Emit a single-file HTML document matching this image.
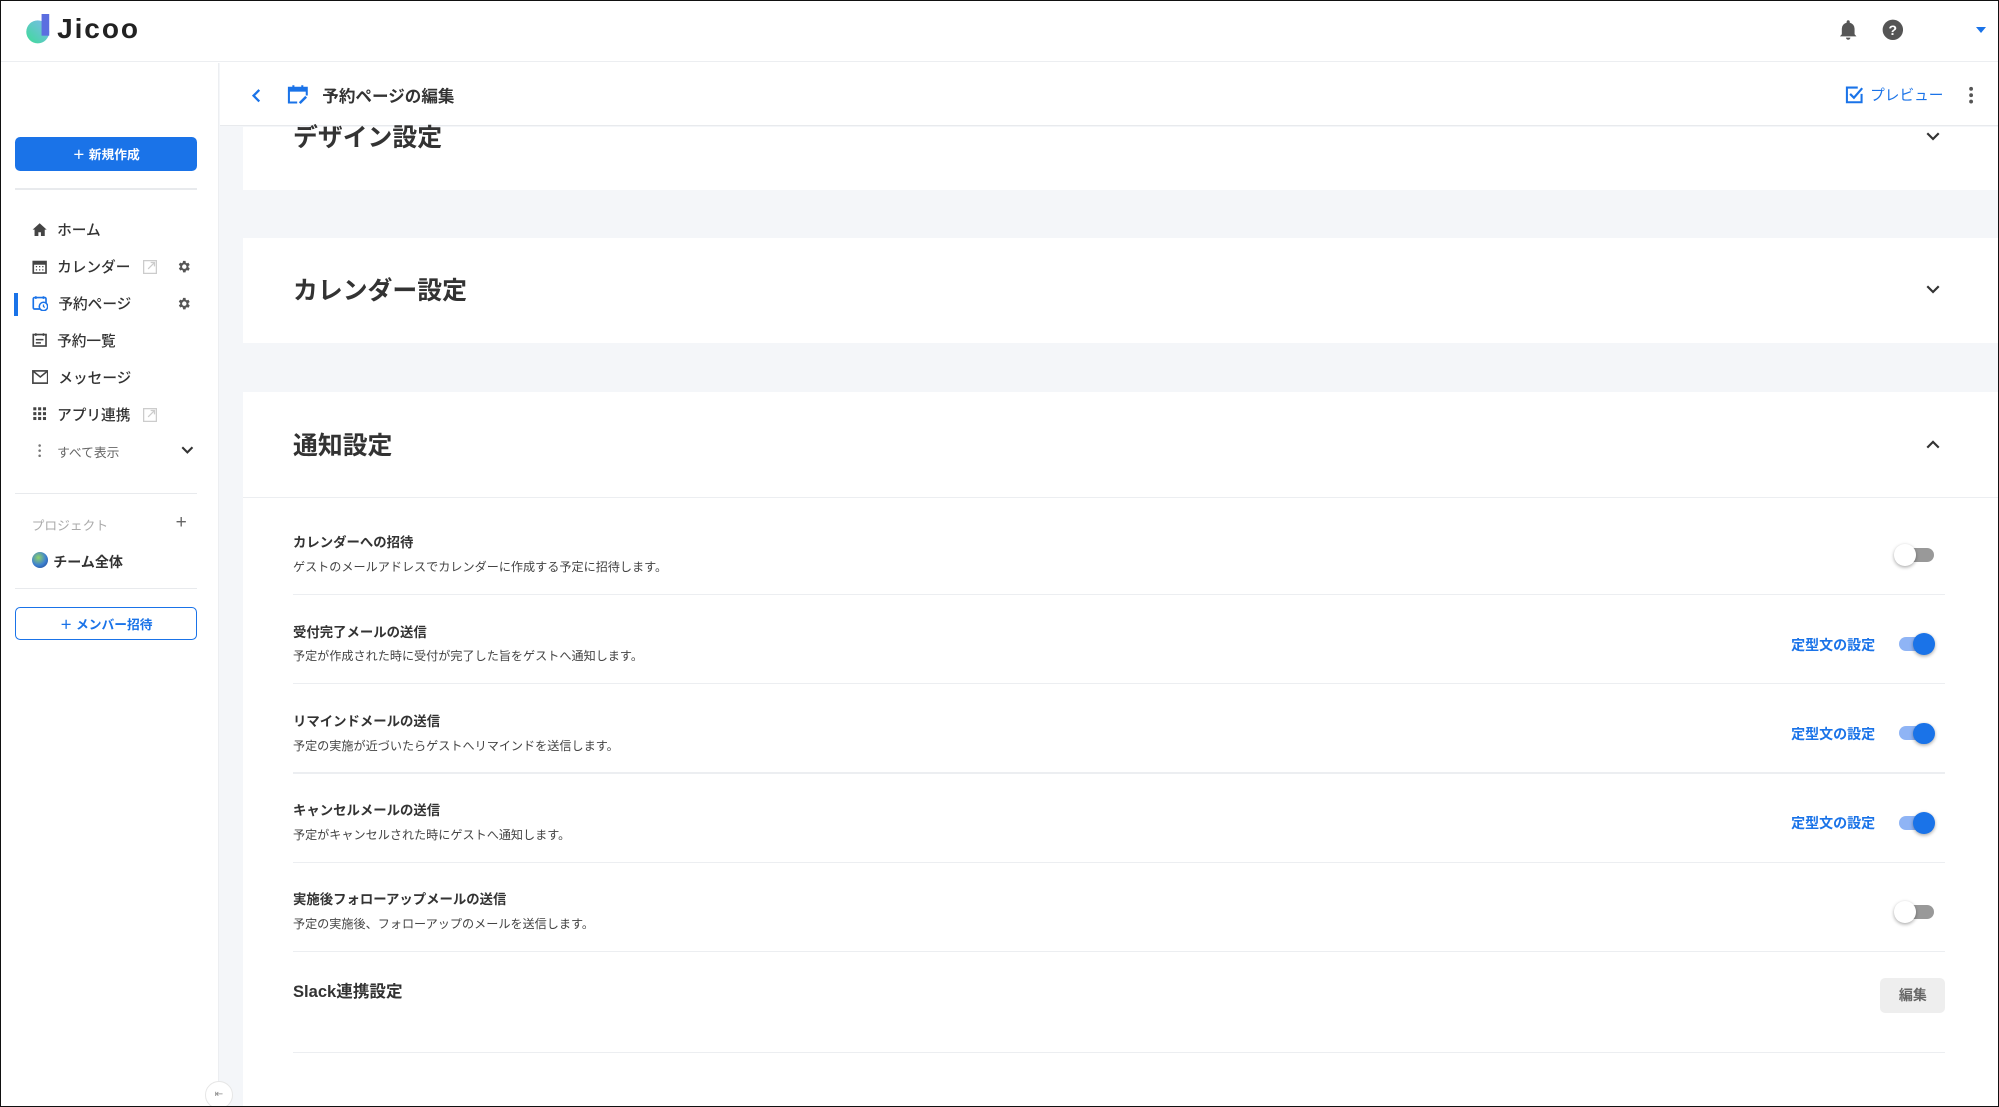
<!DOCTYPE html>
<html><head><meta charset="utf-8">
<style>
*{box-sizing:border-box;margin:0;padding:0}
html,body{width:1999px;height:1107px;overflow:hidden;background:#fff}
#root{zoom:1.275;width:1568px;height:868px;position:relative;font-family:"Liberation Sans","Noto Sans CJK JP",sans-serif;color:#333;border:1px solid #111;overflow:hidden;background:#fff}
.a{position:absolute}
.hdr{left:0;top:0;width:1568px;height:48px;border-bottom:1px solid #eceef1;background:#fff}
.side{left:0;top:49px;width:171px;height:819px;border-right:1px solid #eceef1;background:#fff}
.main{left:171px;top:49px;width:1397px;height:819px;background:#f4f6f9}
.nav{left:24px;font-size:11.5px;font-weight:500;color:#333;display:flex;align-items:center;height:18px}
.nav svg{margin-right:8px}
.line{height:1px;background:#e8eaed}
.card{background:#fff;left:190px;width:1376px}
.ttl{font-size:19.5px;font-weight:700;color:#333;left:229px}
.rt{left:229px;font-size:10.5px;font-weight:700;color:#333}
.rd{left:229px;font-size:9.5px;color:#444}
.rl{left:229px;width:1296px;height:1px;background:#eceef1}
.tog{width:30px;height:16px}
.tog .tr{position:absolute;left:3px;top:3px;width:26px;height:11px;border-radius:6px;background:#999}
.tog .kn{position:absolute;top:0;width:17px;height:17px;border-radius:50%;background:#fff;box-shadow:0 1px 3px rgba(0,0,0,.35)}
.tog.on .tr{background:#8fb4f5}
.tog.on .kn{background:#1a73e8;left:14px}
.tog.off .kn{left:-2px}
.lnk{font-size:11px;font-weight:700;color:#1a73e8}
</style></head><body><div id="root">
<div class="a hdr">
  <svg class="a" style="left:19px;top:10px" width="22" height="24" viewBox="0 0 22 24"><defs><linearGradient id="g" x1="0" y1="1" x2="1" y2="0"><stop offset="0" stop-color="#3ddc97"/><stop offset="1" stop-color="#7fb8f0"/></linearGradient></defs><circle cx="10" cy="14" r="9" fill="url(#g)"/><rect x="13" y="0" width="6" height="17" fill="#5b6ee0"/></svg>
  <div class="a" style="left:44px;top:9px;font-size:22px;font-weight:700;color:#222;letter-spacing:1.5px;line-height:26px">Jicoo</div>
  <svg class="a" style="left:1441px;top:14px" width="16" height="17" viewBox="0 0 16 17"><path d="M8 1a1.2 1.2 0 0 1 1.2 1.2v.6A5 5 0 0 1 13 7.6V12l1.5 1.6H1.5L3 12V7.6a5 5 0 0 1 3.8-4.8v-.6A1.2 1.2 0 0 1 8 1zM6.3 14.6h3.4a1.7 1.7 0 0 1-3.4 0z" fill="#555"/></svg>
  <svg class="a" style="left:1475px;top:14px" width="17" height="17" viewBox="0 0 17 17"><circle cx="8.5" cy="8.5" r="8" fill="#555"/><text x="8.5" y="12.5" text-anchor="middle" font-size="11" font-weight="700" fill="#fff" font-family="Liberation Sans">?</text></svg>
  <div class="a" style="left:1549px;top:20px;border-left:4.5px solid transparent;border-right:4.5px solid transparent;border-top:5px solid #1a73e8"></div>
</div>
<div class="a side"></div>
<div class="a main"></div>
<!-- sidebar -->
<div class="a" style="left:11px;top:107px;width:143px;height:26px;background:#1a73e8;border-radius:4px;color:#fff;font-size:10px;font-weight:700;display:flex;align-items:center;justify-content:center">＋ 新規作成</div>
<div class="a line" style="left:11px;top:147px;width:143px"></div>
<div class="a nav" style="top:170px"><svg width="12" height="12" viewBox="0 0 12 12"><path d="M6 1L0.5 6H2v5h3V8h2v3h3V6h1.5z" fill="#444"/></svg>ホーム</div>
<div class="a nav" style="top:199px"><svg width="12" height="12" viewBox="0 0 12 12"><rect x="1" y="2" width="10" height="9" fill="none" stroke="#444" stroke-width="1.3"/><rect x="1" y="2" width="10" height="2.5" fill="#444"/><path d="M3 6h1M5.5 6h1M8 6h1M3 8.5h1M5.5 8.5h1M8 8.5h1" stroke="#444"/></svg>カレンダー</div>
<div class="a nav" style="top:228px;color:#333"><svg width="13" height="13" viewBox="0 0 13 13"><rect x="1" y="2" width="10" height="9" rx="1" fill="none" stroke="#1a73e8" stroke-width="1.3"/><path d="M3 1v2M9 1v2" stroke="#1a73e8" stroke-width="1.3"/><circle cx="9" cy="9" r="3.3" fill="#fff" stroke="#1a73e8" stroke-width="1.2"/><path d="M9 7.5V9l1 .8" stroke="#1a73e8" fill="none"/></svg>予約ページ</div>
<div class="a nav" style="top:257px"><svg width="12" height="12" viewBox="0 0 12 12"><rect x="1" y="2" width="10" height="9" fill="none" stroke="#444" stroke-width="1.3"/><path d="M3 1v2M9 1v2M3 6h6M3 8.5h4" stroke="#444" stroke-width="1.2"/></svg>予約一覧</div>
<div class="a nav" style="top:286px"><svg width="13" height="11" viewBox="0 0 13 11"><rect x="0.7" y="0.7" width="11.6" height="9.6" fill="none" stroke="#444" stroke-width="1.3"/><path d="M1 1l5.5 4.5L12 1" fill="none" stroke="#444" stroke-width="1.2"/></svg>メッセージ</div>
<div class="a nav" style="top:315px"><svg width="12" height="12" viewBox="0 0 12 12" fill="#444"><rect x="1" y="1" width="2.4" height="2.4"/><rect x="4.8" y="1" width="2.4" height="2.4"/><rect x="8.6" y="1" width="2.4" height="2.4"/><rect x="1" y="4.8" width="2.4" height="2.4"/><rect x="4.8" y="4.8" width="2.4" height="2.4"/><rect x="8.6" y="4.8" width="2.4" height="2.4"/><rect x="1" y="8.6" width="2.4" height="2.4"/><rect x="4.8" y="8.6" width="2.4" height="2.4"/><rect x="8.6" y="8.6" width="2.4" height="2.4"/></svg>アプリ連携</div>
<div class="a nav" style="top:344px;font-size:10px;font-weight:400;color:#666"><svg width="12" height="12" viewBox="0 0 12 12" fill="#777"><circle cx="6" cy="2" r="1"/><circle cx="6" cy="6" r="1"/><circle cx="6" cy="10" r="1"/></svg>すべて表示</div>
<svg class="a" style="left:141px;top:349px" width="10" height="7" viewBox="0 0 10 7"><path d="M1 1l4 4 4-4" stroke="#333" stroke-width="1.6" fill="none"/></svg>
<div class="a" style="left:10px;top:229px;width:3px;height:18px;background:#1a73e8"></div>
<svg class="a" style="left:111px;top:203px" width="11" height="11" viewBox="0 0 11 11"><rect x="0.5" y="0.5" width="10" height="10" fill="none" stroke="#ccc"/><path d="M4 7l5-5M6 2h3v3" stroke="#ccc" fill="none"/></svg>
<svg class="a" style="left:111px;top:319px" width="11" height="11" viewBox="0 0 11 11"><rect x="0.5" y="0.5" width="10" height="10" fill="none" stroke="#ccc"/><path d="M4 7l5-5M6 2h3v3" stroke="#ccc" fill="none"/></svg>
<svg class="a" style="left:137px;top:202px" width="12" height="12" viewBox="0 0 24 24"><path fill="#555" d="M19.4 13a7.5 7.5 0 0 0 0-2l2.1-1.6-2-3.5-2.5 1a7 7 0 0 0-1.7-1L15 3h-4l-.4 2.6a7 7 0 0 0-1.7 1l-2.5-1-2 3.5L6.6 11a7.5 7.5 0 0 0 0 2l-2.1 1.6 2 3.5 2.5-1a7 7 0 0 0 1.7 1L11 21h4l.4-2.6a7 7 0 0 0 1.7-1l2.5 1 2-3.5zM13 15.5a3.5 3.5 0 1 1 0-7 3.5 3.5 0 0 1 0 7z"/></svg>
<svg class="a" style="left:137px;top:231px" width="12" height="12" viewBox="0 0 24 24"><path fill="#555" d="M19.4 13a7.5 7.5 0 0 0 0-2l2.1-1.6-2-3.5-2.5 1a7 7 0 0 0-1.7-1L15 3h-4l-.4 2.6a7 7 0 0 0-1.7 1l-2.5-1-2 3.5L6.6 11a7.5 7.5 0 0 0 0 2l-2.1 1.6 2 3.5 2.5-1a7 7 0 0 0 1.7 1L11 21h4l.4-2.6a7 7 0 0 0 1.7-1l2.5 1 2-3.5zM13 15.5a3.5 3.5 0 1 1 0-7 3.5 3.5 0 0 1 0 7z"/></svg>
<div class="a line" style="left:11px;top:386px;width:143px"></div>
<div class="a" style="left:24px;top:403px;font-size:10px;color:#aaa">プロジェクト</div>
<div class="a" style="left:137px;top:401px;font-size:15px;color:#666">+</div>
<div class="a" style="left:24px;top:432px;width:13px;height:13px;border-radius:50%;background:radial-gradient(circle at 40% 35%,#8fd36a 0,#3c7fd0 55%,#1b3f80 100%)"></div>
<div class="a" style="left:41px;top:432px;font-size:11px;font-weight:700;color:#333">チーム全体</div>
<div class="a line" style="left:11px;top:460px;width:143px"></div>
<div class="a" style="left:11px;top:475px;width:143px;height:26px;border:1px solid #1a73e8;border-radius:4px;color:#1a73e8;font-size:10px;font-weight:700;display:flex;align-items:center;justify-content:center">＋ メンバー招待</div>
<div class="a" style="left:160px;top:847px;width:22px;height:22px;border-radius:50%;background:#fff;border:1px solid #e6e6e6;font-size:8px;color:#888;text-align:center;line-height:20px">⇤</div>
<!-- subheader -->
<div class="a" style="left:172px;top:49px;width:1396px;height:49px;background:#fff;border-bottom:1px solid #e8eaed"></div>
<svg class="a" style="left:196px;top:68px" width="8" height="12" viewBox="0 0 8 12"><path d="M6.5 1.5L2 6l4.5 4.5" stroke="#1a73e8" stroke-width="1.8" fill="none"/></svg>
<svg class="a" style="left:224px;top:65px" width="17" height="16" viewBox="0 0 17 16"><path d="M5 1v3M12 1v3" stroke="#1a73e8" stroke-width="1.6"/><path d="M8 14.5H1.5V3h14v6" fill="none" stroke="#1a73e8" stroke-width="1.6"/><rect x="1.5" y="3" width="14" height="3" fill="#1a73e8"/><path d="M10 15l5-5" stroke="#1a73e8" stroke-width="2"/></svg>
<div class="a" style="left:252px;top:64px;font-size:13px;font-weight:700;color:#333">予約ページの編集</div>
<svg class="a" style="left:1446px;top:66px" width="15" height="15" viewBox="0 0 15 15"><path d="M13 7v6.5H1.5V2H10" fill="none" stroke="#1a73e8" stroke-width="1.6"/><path d="M4 7l3 3 6.5-7.5" fill="none" stroke="#1a73e8" stroke-width="1.7"/></svg>
<div class="a" style="left:1466px;top:65px;font-size:11.5px;color:#1a73e8">プレビュー</div>
<svg class="a" style="left:1541px;top:66px" width="8" height="16" viewBox="0 0 8 16" fill="#555"><circle cx="4" cy="3" r="1.5"/><circle cx="4" cy="8" r="1.5"/><circle cx="4" cy="13" r="1.5"/></svg>
<!-- cards -->
<div class="a card" style="top:99px;height:49px"></div>
<div class="a ttl" style="top:92px">デザイン設定</div>
<svg class="a" style="left:1510px;top:103px" width="11" height="7" viewBox="0 0 11 7"><path d="M1 1l4.5 4.5L10 1" stroke="#333" stroke-width="1.7" fill="none"/></svg>
<div class="a card" style="top:186px;height:82px"></div>
<div class="a ttl" style="top:212px">カレンダー設定</div>
<svg class="a" style="left:1510px;top:223px" width="11" height="7" viewBox="0 0 11 7"><path d="M1 1l4.5 4.5L10 1" stroke="#333" stroke-width="1.7" fill="none"/></svg>
<div class="a card" style="top:307px;height:561px"></div>
<div class="a ttl" style="top:333px">通知設定</div>
<svg class="a" style="left:1510px;top:344px" width="11" height="7" viewBox="0 0 11 7"><path d="M1 6l4.5-4.5L10 6" stroke="#333" stroke-width="1.7" fill="none"/></svg>
<div class="a" style="left:190px;top:389px;width:1376px;height:1px;background:#eceef1"></div>

<div class="a rt" style="top:416px">カレンダーへの招待</div>
<div class="a rd" style="top:437px">ゲストのメールアドレスでカレンダーに作成する予定に招待します。</div>
<div class="a tog off" style="left:1487px;top:426px"><div class="tr"></div><div class="kn"></div></div>
<div class="a rl" style="top:465px"></div>

<div class="a rt" style="top:486px">受付完了メールの送信</div>
<div class="a rd" style="top:507px">予定が作成された時に受付が完了した旨をゲストへ通知します。</div>
<div class="a lnk" style="left:1404px;top:497px">定型文の設定</div>
<div class="a tog on" style="left:1486px;top:496px"><div class="tr"></div><div class="kn"></div></div>
<div class="a rl" style="top:535px"></div>

<div class="a rt" style="top:556px">リマインドメールの送信</div>
<div class="a rd" style="top:577px">予定の実施が近づいたらゲストへリマインドを送信します。</div>
<div class="a lnk" style="left:1404px;top:567px">定型文の設定</div>
<div class="a tog on" style="left:1486px;top:566px"><div class="tr"></div><div class="kn"></div></div>
<div class="a rl" style="top:605px"></div>

<div class="a rt" style="top:626px">キャンセルメールの送信</div>
<div class="a rd" style="top:647px">予定がキャンセルされた時にゲストへ通知します。</div>
<div class="a lnk" style="left:1404px;top:637px">定型文の設定</div>
<div class="a tog on" style="left:1486px;top:636px"><div class="tr"></div><div class="kn"></div></div>
<div class="a rl" style="top:675px"></div>

<div class="a rt" style="top:696px">実施後フォローアップメールの送信</div>
<div class="a rd" style="top:717px">予定の実施後、フォローアップのメールを送信します。</div>
<div class="a tog off" style="left:1487px;top:706px"><div class="tr"></div><div class="kn"></div></div>
<div class="a rl" style="top:745px"></div>

<div class="a" style="left:229px;top:766px;font-size:13px;font-weight:700;color:#333">Slack連携設定</div>
<div class="a" style="left:1474px;top:766px;width:51px;height:28px;background:#eee;border-radius:4px;font-size:11px;font-weight:700;color:#666;display:flex;align-items:center;justify-content:center">編集</div>
<div class="a rl" style="top:824px"></div>
</div></body></html>
